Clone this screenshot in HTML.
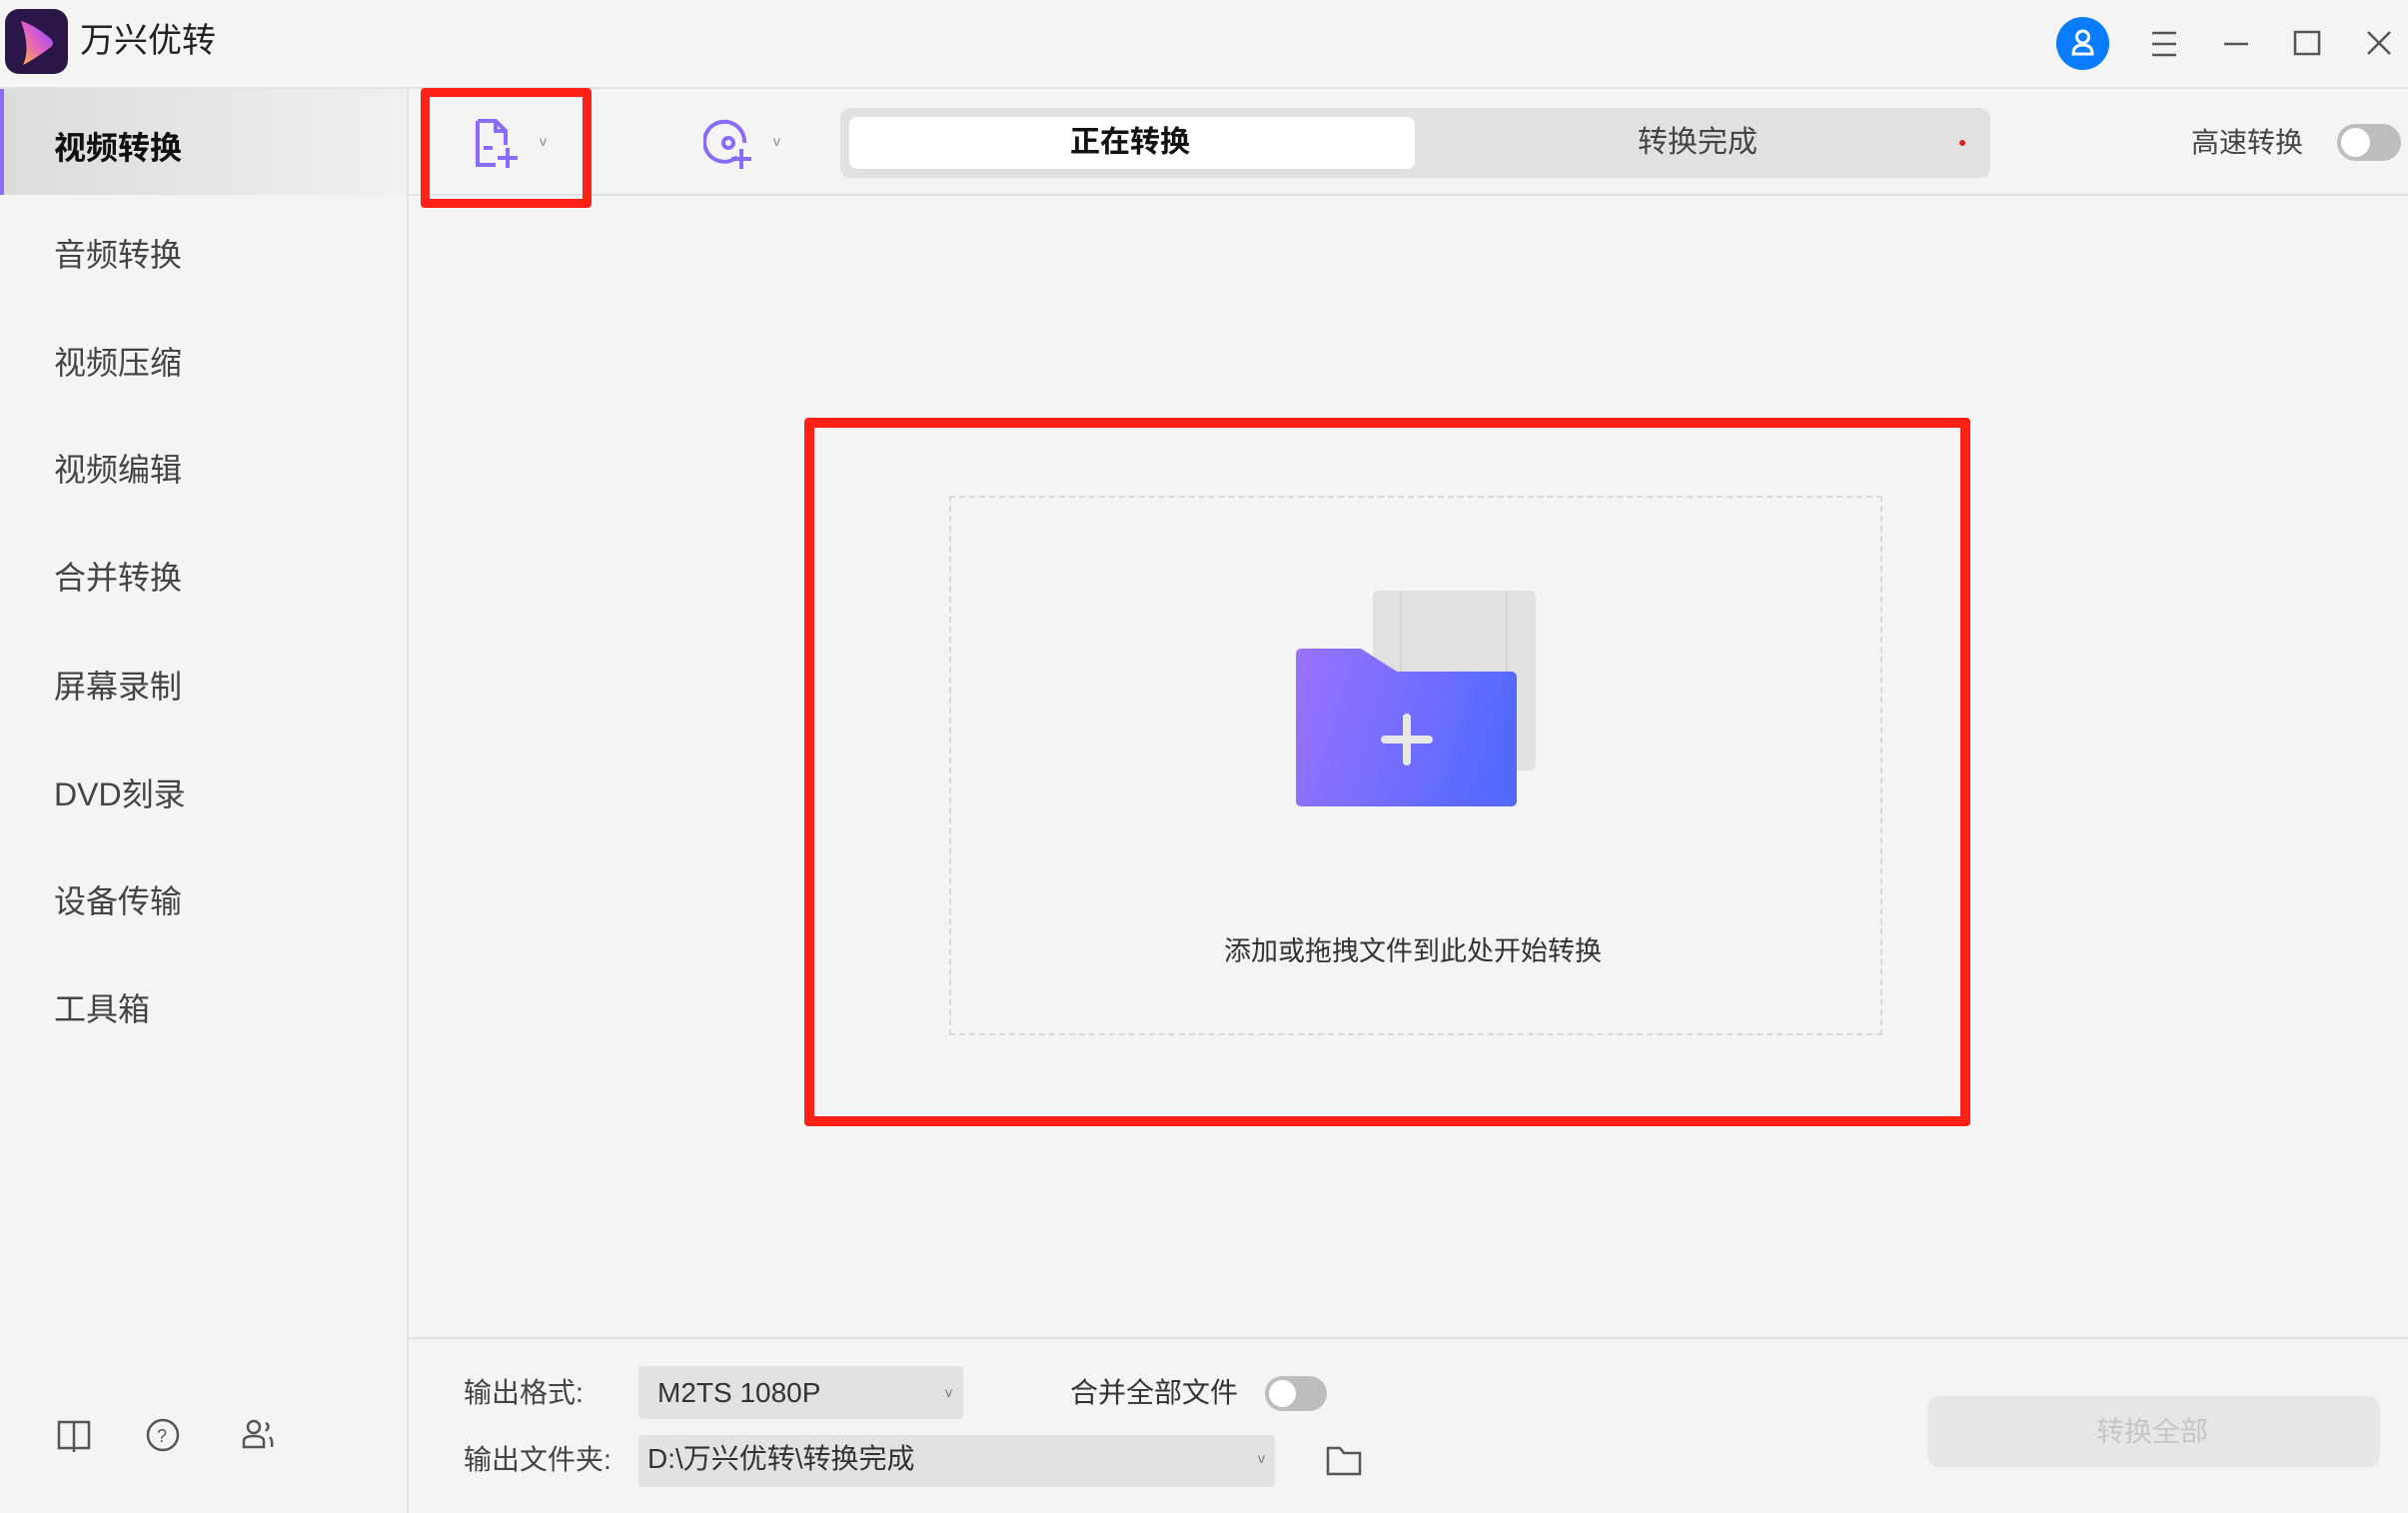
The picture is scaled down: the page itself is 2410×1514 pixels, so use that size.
<!DOCTYPE html>
<html><head><meta charset="utf-8"><style>
*{margin:0;padding:0;box-sizing:border-box}
body{width:2410px;height:1514px;background:#f4f4f4;font-family:"Liberation Sans","Noto Sans CJK SC",sans-serif;color:#333;position:relative;overflow:hidden}
.a{position:absolute}
.t{position:absolute;white-space:nowrap;line-height:1}
.side{font-size:32px;color:#444;left:54px}
</style></head><body>
<!-- title bar -->
<div class="a" style="left:5px;top:9px;width:63px;height:65px;border-radius:14px;background:#2a1748"></div>
<svg class="a" style="left:5px;top:9px" width="63" height="65"><defs><linearGradient id="lg" x1="0" y1="1" x2="1" y2="0"><stop offset="0" stop-color="#ffb33e"/><stop offset="0.5" stop-color="#e05dc8"/><stop offset="1" stop-color="#7b4dff"/></linearGradient></defs><path d="M16 12 Q30 16 46 30 Q50 34 46 38 Q30 50 18 56 Q26 40 16 12Z" fill="url(#lg)"/></svg>
<div class="t" style="left:80px;top:24px;font-size:34px;color:#222">万兴优转</div>
<div class="a" style="left:0;top:87px;width:2410px;height:2px;background:#e2e2e2"></div>
<div class="a" style="left:2058px;top:17px;width:53px;height:53px;border-radius:50%;background:#0a7cff"></div>
<svg class="a" style="left:2058px;top:17px" width="53" height="53" fill="none" stroke="#fff" stroke-width="3"><circle cx="26.5" cy="20" r="6"/><path d="M17 37 Q17 28 26.5 28 Q36 28 36 37 Z"/></svg>
<svg class="a" style="left:2150px;top:28px" width="250" height="32" stroke="#555" stroke-width="2.5" fill="none"><path d="M4 5h24M4 16h24M4 27h24"/><path d="M76 16h24"/><rect x="147" y="4" width="24" height="22"/><path d="M220 4l22 22M242 4l-22 22"/></svg>
<!-- sidebar -->
<div class="a" style="left:407px;top:89px;width:2px;height:1425px;background:#e4e4e4"></div>
<div class="a" style="left:0;top:89px;width:407px;height:106px;background:linear-gradient(90deg,#dcdcdc,#f0f0f0);border-left:4px solid #8d6bff"></div>
<div class="t side" style="top:132px;font-weight:bold;color:#111">视频转换</div>
<div class="t side" style="top:239px">音频转换</div>
<div class="t side" style="top:347px">视频压缩</div>
<div class="t side" style="top:454px">视频编辑</div>
<div class="t side" style="top:562px">合并转换</div>
<div class="t side" style="top:671px">屏幕录制</div>
<div class="t side" style="top:779px">DVD刻录</div>
<div class="t side" style="top:886px">设备传输</div>
<div class="t side" style="top:994px">工具箱</div>
<svg class="a" style="left:56px;top:1418px" width="220" height="36" stroke="#555" stroke-width="2.5" fill="none"><path d="M3 5h30v26H3zM18 5v30"/><circle cx="107" cy="18" r="15"/><text x="101" y="25" font-size="18" fill="#555" stroke="none" font-family="Liberation Sans">?</text><circle cx="198" cy="10" r="6"/><path d="M188 30v-6q0-5 10-5t10 5v6z"/><path d="M210 6q5 3 0 8M214 20q3 3 2 10"/></svg>
<!-- toolbar -->
<div class="a" style="left:409px;top:194px;width:2001px;height:2px;background:#e2e2e2"></div>
<div class="a" style="left:421px;top:88px;width:171px;height:120px;border:9px solid #ff2116;border-radius:4px"></div>
<svg class="a" style="left:474px;top:118px" width="50" height="52" fill="none" stroke="#8a6bff" stroke-width="4"><path d="M4 3h18l10 10v14M4 3v44h18"/><path d="M22 3v10h10M10 30h9M34 30v20M24 40h20"/></svg>
<div class="t" style="left:540px;top:134px;font-size:14px;color:#888">v</div>
<svg class="a" style="left:704px;top:118px" width="56" height="52" fill="none" stroke="#8a6bff" stroke-width="4"><path d="M34 39A20 20 0 1 1 41 25"/><circle cx="25" cy="25" r="5"/><path d="M38 31v20M28 41h20"/></svg>
<div class="t" style="left:774px;top:134px;font-size:14px;color:#888">v</div>
<div class="a" style="left:841px;top:108px;width:1151px;height:70px;background:#e1e1e1;border-radius:10px"></div>
<div class="a" style="left:850px;top:117px;width:566px;height:52px;background:#fff;border-radius:8px"></div>
<div class="t" style="left:1071px;top:128px;font-size:30px;font-weight:bold;color:#111">正在转换</div>
<div class="t" style="left:1639px;top:128px;font-size:30px;color:#444">转换完成</div>
<div class="a" style="left:1961px;top:140px;width:6px;height:6px;border-radius:50%;background:#e62020"></div>
<div class="t" style="left:2193px;top:129px;font-size:28px;color:#444">高速转换</div>
<div class="a" style="left:2339px;top:124px;width:64px;height:37px;border-radius:19px;background:#bdbdbd"></div>
<div class="a" style="left:2343px;top:128px;width:29px;height:29px;border-radius:50%;background:#fff"></div>
<!-- drop area -->
<div class="a" style="left:805px;top:418px;width:1167px;height:709px;border:10px solid #ff2116;border-radius:4px"></div>
<div class="a" style="left:950px;top:496px;width:934px;height:540px;border:2px dashed #d8d8d8"></div>
<svg class="a" style="left:1290px;top:585px" width="260" height="230"><defs><linearGradient id="fg" x1="0" y1="0" x2="1" y2="0.2"><stop offset="0" stop-color="#9a72ff"/><stop offset="1" stop-color="#5669ff"/></linearGradient></defs>
<rect x="84" y="6" width="163" height="180" rx="6" fill="#e1e1e1"/><path d="M112 6v180M218 6v180" stroke="#d4d4d4" stroke-width="1.5"/>
<path d="M13 64Q7 64 7 70V216Q7 222 13 222H222Q228 222 228 216V93Q228 87 222 87H108L72 64Z" fill="url(#fg)"/>
<path d="M118 133v44M96 155h44" stroke="#e8e8e8" stroke-width="8" stroke-linecap="round"/></svg>
<div class="t" style="left:1225px;top:939px;font-size:27px;color:#333">添加或拖拽文件到此处开始转换</div>
<!-- bottom -->
<div class="a" style="left:409px;top:1338px;width:2001px;height:2px;background:#e2e2e2"></div>
<div class="t" style="left:464px;top:1380px;font-size:28px;color:#444">输出格式:</div>
<div class="a" style="left:639px;top:1367px;width:325px;height:53px;background:#e2e2e2;border-radius:4px"></div>
<div class="t" style="left:658px;top:1380px;font-size:28px;color:#333">M2TS 1080P</div>
<div class="t" style="left:946px;top:1386px;font-size:14px;color:#777">v</div>
<div class="t" style="left:1071px;top:1380px;font-size:28px;color:#333">合并全部文件</div>
<div class="a" style="left:1266px;top:1377px;width:62px;height:35px;border-radius:18px;background:#bdbdbd"></div>
<div class="a" style="left:1270px;top:1381px;width:27px;height:27px;border-radius:50%;background:#fff"></div>
<div class="t" style="left:464px;top:1447px;font-size:28px;color:#444">输出文件夹:</div>
<div class="a" style="left:639px;top:1436px;width:637px;height:52px;background:#e2e2e2;border-radius:4px"></div>
<div class="t" style="left:648px;top:1446px;font-size:28px;color:#333">D:\万兴优转\转换完成</div>
<div class="t" style="left:1259px;top:1452px;font-size:14px;color:#777">v</div>
<svg class="a" style="left:1327px;top:1446px" width="36" height="32" fill="none" stroke="#555" stroke-width="2.5"><path d="M2 3h12l4 5h16v21H2z"/></svg>
<div class="a" style="left:1929px;top:1397px;width:453px;height:71px;background:#e6e6e6;border-radius:12px"></div>
<div class="t" style="left:2098px;top:1419px;font-size:28px;color:#c6c6c6">转换全部</div>
</body></html>
